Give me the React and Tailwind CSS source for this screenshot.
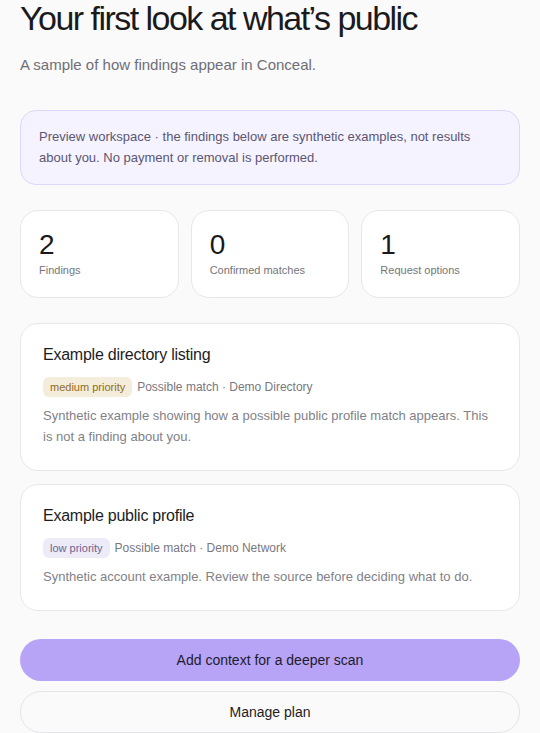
import React from 'react';

const stats = [
  { value: '2', label: 'Findings' },
  { value: '0', label: 'Confirmed matches' },
  { value: '1', label: 'Request options' },
];

const findings = [
  {
    title: 'Example directory listing',
    priority: 'medium priority',
    badge: 'bg-[#f5eddb] text-[#8f6b22]',
    meta: 'Possible match · Demo Directory',
    text: 'Synthetic example showing how a possible public profile match appears. This is not a finding about you.',
  },
  {
    title: 'Example public profile',
    priority: 'low priority',
    badge: 'bg-[#eeebf8] text-[#6c6590]',
    meta: 'Possible match · Demo Network',
    text: 'Synthetic account example. Review the source before deciding what to do.',
  },
];

const FindingCard = ({ item }) => (
  <div className="rounded-[18px] border border-[#e7e7ea] bg-white px-[22px] pt-[21px] pb-[23px]">
    <h3 className="text-[16px] leading-5 text-[#1c1c1f] tracking-[-0.015em]">{item.title}</h3>
    <div className="mt-3 flex items-center gap-[5px]">
      <span className={`rounded-md px-[7px] h-5 flex items-center text-[11px] ${item.badge}`}>{item.priority}</span>
      <span className="text-[12px] text-[#78787f]">{item.meta}</span>
    </div>
    <p className="mt-2 text-[13px] leading-[21px] text-[#818188]">{item.text}</p>
  </div>
);

export default function App() {
  return (
    <div className="min-h-screen bg-[#fafafa] px-5 font-['Liberation_Sans',Arial,sans-serif]">
      <h1 className="text-[34px] leading-[1.1] tracking-[-0.045em] text-[#1a1a1c]">Your first look at what’s public</h1>
      <p className="mt-4 text-[15px] leading-6 text-[#6f6f77]">A sample of how findings appear in Conceal.</p>

      <div className="mt-[33px] rounded-2xl border border-[#ddd6fe] bg-[#f5f3ff] px-[18px] pt-[15px] pb-4 text-[13px] leading-[21px] text-[#5b5672]">
        Preview workspace · the findings below are synthetic examples, not results about you. No payment or removal is performed.
      </div>

      <div className="mt-[25px] grid grid-cols-3 gap-3">
        {stats.map((s) => (
          <div key={s.label} className="rounded-[18px] border border-[#e7e7ea] bg-white px-[18px] pt-5 pb-[19px]">
            <div className="text-[28px] leading-7 text-[#1a1a1c]">{s.value}</div>
            <div className="mt-[3px] text-[11px] leading-4 text-[#75757c]">{s.label}</div>
          </div>
        ))}
      </div>

      <div className="mt-[25px] flex flex-col gap-[13px]">
        {findings.map((f) => (
          <FindingCard key={f.title} item={f} />
        ))}
      </div>

      <div className="mt-7 flex flex-col gap-[10px]">
        <button className="h-[42px] rounded-full bg-[#b7a4f7] text-[14px] text-[#1e1b2c]">Add context for a deeper scan</button>
        <button className="h-[42px] rounded-full border border-[#e5e5e8] text-[14px] text-[#1e1e22]">Manage plan</button>
      </div>
    </div>
  );
}
